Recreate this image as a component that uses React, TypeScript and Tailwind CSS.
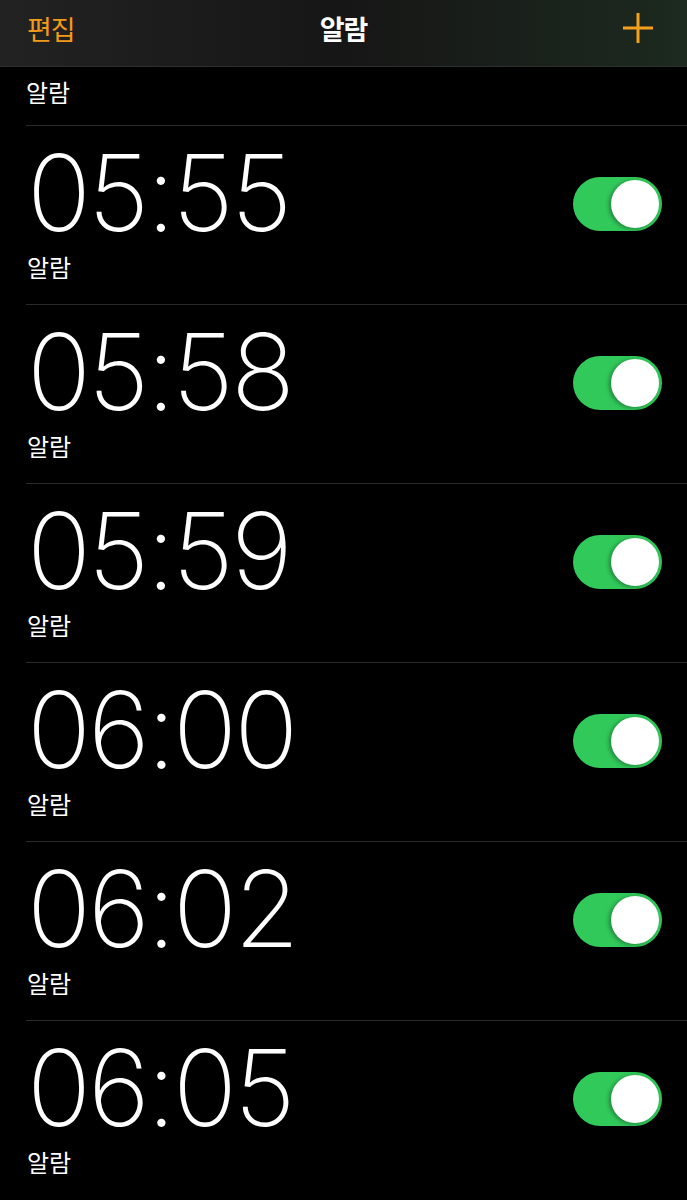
import React from "react";

const alarms = ["05:55", "05:58", "05:59", "06:00", "06:02", "06:05"];

function Toggle() {
  return (
    <div className="relative h-[54px] w-[89px] rounded-full bg-[#31c95a]">
      <div className="absolute right-[3px] top-[3px] h-[48px] w-[48px] rounded-full bg-white shadow-[-2px_1px_4px_rgba(0,0,0,0.35)]" />
    </div>
  );
}

function AlarmRow({ time }: { time: string }) {
  return (
    <div className="flex h-[179px] items-start justify-between border-t border-[#2a2a2c] pr-[25px]">
      <div className="pl-[1px]">
        <div
          className="mt-[24px] text-[106px] font-extralight leading-[86px] tracking-[-3px] text-white"
          style={{ fontFamily: "Inter, sans-serif" }}
        >
          {time}
        </div>
        <div className="mt-[19px] text-[24px] leading-none text-white">알람</div>
      </div>
      <div className="mt-[51px]">
        <Toggle />
      </div>
    </div>
  );
}

export default function App() {
  return (
    <div
      className="h-[1200px] w-[687px] overflow-hidden bg-black"
      style={{ fontFamily: '"Noto Sans CJK KR", "Noto Sans", sans-serif' }}
    >
      <header className="relative flex h-[67px] items-start justify-between border-b border-[#2e2e2e] bg-gradient-to-r from-[#222222] via-[#161616] to-[#1c2a1f] pl-[27px] pt-[15px]">
        <span className="text-[27px] leading-none tracking-[-1px] text-[#f29a1c]">편집</span>
        <span className="absolute left-1/2 top-[15px] -translate-x-1/2 text-[27px] font-bold leading-none tracking-[-1px] text-white">
          알람
        </span>
        <svg width="34" height="34" viewBox="0 0 34 34" className="mr-[32px] -mt-[4px]">
          <path d="M17 2v30M2 17h30" stroke="#f5a01c" strokeWidth="3" />
        </svg>
      </header>
      <div className="ml-[26px]">
        <div className="h-[58px] pt-[13px] text-[24px] leading-none text-white">알람</div>
        {alarms.map((t) => (
          <AlarmRow key={t} time={t} />
        ))}
      </div>
    </div>
  );
}
